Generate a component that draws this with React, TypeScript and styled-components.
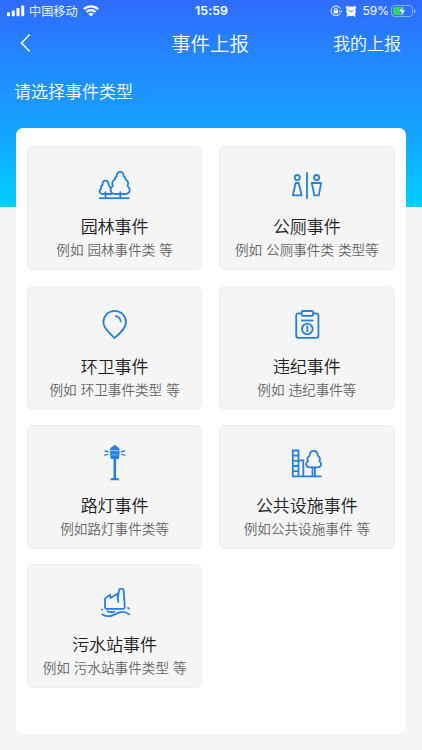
import React from "react";
import styled, { createGlobalStyle } from "styled-components";

const GlobalStyle = createGlobalStyle`
  * { box-sizing: border-box; }
  body {
    margin: 0;
    background: #f5f5f5;
    font-family: "Noto Sans CJK SC", sans-serif;
    font-weight: 350;
    -webkit-font-smoothing: antialiased;
  }
`;

const Page = styled.div`
  height: 750px;
  overflow: hidden;
  background: linear-gradient(180deg, #2f6bff 0, #2288ff 60px, #1c98ff 103px, #12aaff 145px, #00d0ff 207px, #f5f5f5 207px);
  color: #fff;
`;

const StatusBar = styled.header`
  height: 22px;
  display: grid;
  grid-template-columns: 1fr auto 1fr;
  align-items: center;
  padding: 0 6px 0 7px;
  line-height: 22px;
`;

const StatusGroup = styled.div<{ $end?: boolean }>`
  display: flex;
  align-items: center;
  justify-content: ${(p) => (p.$end ? "flex-end" : "flex-start")};
  svg { display: block; flex: none; }
`;

const Carrier = styled.span`
  font-size: 12.2px;
  margin: 0 5px 0 4px;
`;

const Clock = styled.span`
  font: 600 12.3px/22px Inter, sans-serif;
  letter-spacing: 0.1px;
`;

const Percent = styled.span`
  font: 400 12px/22px Inter, sans-serif;
  margin: 0 2px 0 5px;
`;

const NavBar = styled.nav`
  height: 44px;
  display: grid;
  grid-template-columns: 1fr auto 1fr;
  align-items: center;
  padding: 0 21px 0 19px;
`;

const BackButton = styled.button`
  width: 14px;
  height: 24px;
  padding: 0;
  border: 0;
  background: none;
  color: inherit;
  svg { display: block; }
`;

const NavTitle = styled.h1`
  margin: 0;
  padding-bottom: 3px;
  font-size: 19.4px;
  font-weight: inherit;
  line-height: 40px;
`;

const NavLink = styled.span`
  justify-self: end;
  padding-bottom: 2px;
  font-size: 17px;
  line-height: 40px;
`;

const Prompt = styled.p`
  margin: 0;
  height: 62px;
  padding: 12px 14px 0;
  font-size: 17px;
  line-height: 25px;
`;

const Panel = styled.main`
  margin: 0 16px;
  height: 606px;
  padding: 18.2px 11.5px 0 11px;
  border-radius: 7px;
  background: #fff;
  display: grid;
  grid-template-columns: 1fr 1fr;
  grid-auto-rows: 124px;
  align-content: start;
  gap: 15.35px 17px;
`;

const Card = styled.section`
  border: 1px solid #eeeeee;
  border-radius: 6px;
  background: #f5f5f5;
  display: flex;
  flex-direction: column;
  align-items: center;
  padding-top: 13px;
`;

const CardIcon = styled.svg`
  display: block;
  width: 60px;
  height: 50px;
  overflow: visible;
  fill: none;
  stroke: #2680e3;
  stroke-width: 1.8;
  stroke-linecap: round;
  stroke-linejoin: round;
`;

const CardTitle = styled.h2`
  margin: 3px 0 0;
  color: #202020;
  font-size: 17px;
  font-weight: inherit;
  line-height: 26px;
`;

const CardNote = styled.p`
  margin: 0;
  color: #666;
  font-size: 13.6px;
  line-height: 21px;
  word-spacing: 0.9px;
  white-space: nowrap;
`;

const SignalIcon = () => (
  <svg width="18" height="12" viewBox="0 0 18 12" fill="#fff">
    <rect x="0" y="7.2" width="3" height="4" rx=".8" />
    <rect x="4.8" y="5.4" width="3" height="5.8" rx=".8" />
    <rect x="9.5" y="3" width="3" height="8.2" rx=".8" />
    <rect x="14.2" y="0.4" width="3" height="10.8" rx=".8" />
  </svg>
);

const WifiIcon = () => (
  <svg width="16" height="12" viewBox="0 0 16 12" fill="none" stroke="#fff" strokeWidth="2.2">
    <path d="M.9 4.2a10.2 10.2 0 0 1 14.2 0" />
    <path d="M3.5 7a6.4 6.4 0 0 1 9 0" />
    <path d="M8 11.6 5.4 9a3.8 3.8 0 0 1 5.2 0Z" fill="#fff" stroke="none" />
  </svg>
);

const RotationLockIcon = () => (
  <svg width="12" height="12" viewBox="0 0 12 12" fill="none" stroke="#fff" strokeWidth="1">
    <path d="M10.3 3.6A4.9 4.9 0 1 0 10.2 8.3M8.9 5.6l1.7 1.5 1.2-1.7" />
    <rect x="3.7" y="5.3" width="4.4" height="3.2" rx=".5" fill="#fff" stroke="none" />
    <path d="M4.6 5.5V4.4a1.3 1.3 0 0 1 2.6 0v1.1" />
  </svg>
);

const AlarmIcon = () => (
  <svg width="12" height="12" viewBox="0 0 12 12" stroke="#fff" fill="none" strokeLinecap="round">
    <circle cx="6" cy="6.4" r="4.8" fill="#fff" stroke="none" />
    <path d="M1.6 2.8 2.9 1.7M10.4 2.8 9.1 1.7M2.5 10.8l.7-.9M9.5 10.8l-.7-.9" strokeWidth="1.8" />
    <path d="M3.8 5 6 6.7 8.2 5.5" stroke="#2c72ff" strokeWidth=".8" />
  </svg>
);

const BatteryIcon = () => (
  <svg width="25" height="12" viewBox="0 0 25 12">
    <rect x=".5" y=".5" width="21" height="11" rx="3" fill="none" stroke="#fff" strokeOpacity=".45" />
    <path d="M3.5 2H13v8H3.5Q2 10 2 8.5v-5Q2 2 3.5 2Z" fill="#35d45b" />
    <path d="M12.4.8 7.4 6.8h3.1l-.9 4.5 5.2-6.2h-3.2Z" fill="#fff" stroke="#2d72ff" strokeWidth=".7" />
    <path d="M23 4v4q1.6-.7 1.6-2T23 4Z" fill="#fff" fillOpacity=".5" />
  </svg>
);

const GardenIcon = () => (
  <CardIcon viewBox="0 0 60 50">
    <path d="M26.8 34H17.6c-2 0-3.2-1.5-2.9-3.3.2-1.2.8-1.8 1.5-2.3-.5-1.6.1-2.8 1.3-3.5 0-2.7 1-4.3 3-4.3s3.1 1.6 3.1 4.3c1 .6 1.5 1.4 1.3 2.6" />
    <path d="M29.9 34c-2.6 0-4.2-1.8-4.2-4.2 0-1.7.8-3 2.2-3.8-1.3-2.9-.5-5.1 1.9-6.5-.1-1.5.5-2.5 1.9-3 0-2.9 1.200-4.600 3.500-4.600s3.500 1.700 3.500 4.600c1.400.5 2 1.500 1.900 3 2.400 1.400 3.200 3.600 1.900 6.500 1.400.8 2.200 2.100 2.200 3.800 0 2.400-1.600 4.200-4.200 4.200Z" />
    <path d="M20.5 32.2v5M35.300 32.2v5" />
    <path d="M14 38.2h30.500" strokeLinecap="butt" />
  </CardIcon>
);

const RestroomIcon = () => (
  <CardIcon viewBox="0 0 60 50">
    <circle cx="20.3" cy="17.6" r="2.6" />
    <circle cx="39.6" cy="17.6" r="2.6" />
    <path d="M18.7 23h3l2.9 12.300h-8.800Z" />
    <path d="M34.8 23h9.300l-2.300 12.300h-4.500Z" />
    <path d="M30 13v25.200" />
  </CardIcon>
);

const PinIcon = () => (
  <CardIcon viewBox="0 0 60 50">
    <path d="M29.6 38.2c-5.3-5.3-11.2-10-11.2-16a11.3 11.3 0 0 1 22.6 0c0 6-6 10.7-11.4 16Z" />
    <path d="M30 16.2a5.7 5.7 0 0 1 5.8 5.9" strokeLinecap="butt" />
  </CardIcon>
);

const ClipboardIcon = () => (
  <CardIcon viewBox="0 0 60 50">
    <path d="M24.5 13.3h-3q-2.3 0-2.3 2.3v19.9q0 2.3 2.3 2.3h17.600q2.300 0 2.300-2.300V15.600q0-2.300-2.300-2.300h-3" />
    <rect x="24.5" y="11" width="11.7" height="4.8" rx="1.5" />
    <path d="M24 20.5h12.5" strokeLinecap="butt" />
    <circle cx="30.3" cy="29" r="5.3" />
    <path d="M30.3 25.5v6.5" strokeLinecap="butt" />
  </CardIcon>
);

const LampIcon = () => (
  <CardIcon viewBox="0 1 60 50">
    <path d="M24.6 11.9Q25.6 9 28 8.6q.2-1.6 1.8-1.6t1.8 1.6q2.400.4 3.400 3.300Z" fill="#2680e3" stroke="none" />
    <path d="M25.8 13.4h8l-.6 6.6h-6.800Z" fill="#2680e3" />
    <path d="M25.8 12.7h8M27 16.9h5.600" stroke="#8abaf0" strokeWidth=".8" />
    <path d="M29.8 20.5v20" strokeWidth="2.6" strokeLinecap="butt" />
    <path d="m20.2 13 3 .8M19.9 17.2l2.8-.8M39.4 13l-3 .8M39.7 17.2l-2.8-.8" strokeWidth="1.4" />
    <path d="M25.2 42.300q.2-2.300 2.300-2.300h4.600q2 0 2.300 2.300Z" fill="#2680e3" stroke="none" />
  </CardIcon>
);

const FacilitiesIcon = () => (
  <CardIcon viewBox="0 1 60 50">
    <path d="M43.9 38.4H15.8V12.5h5.7v25.9M15.8 17.6h5.7M15.8 22.8h5.7M15.8 28h5.7M15.8 33.2h5.7M21.5 22.4h4.8v16" strokeLinejoin="miter" />
    <path d="M34 29.3c-3 .5-4.9-.9-4.800-3.200.1-1.400.8-2.200 1.800-2.900-1.100-2.500-.4-4.400 1.700-5.500 0-2.900 1.500-4.900 4-4.900s4 2 4 4.900c2.200 1.100 2.800 3 1.700 5.500 1 .7 1.700 1.500 1.700 2.900 0 2.300-1.600 3.600-4.700 3.200Z" />
    <path d="M35.5 29.3v9M37.9 29.3v9" />
  </CardIcon>
);

const SewageIcon = () => (
  <CardIcon viewBox="0 2 60 50">
    <path d="M22 32.8Q20 33 20 31V22.6l5.1-3.9.5 3.3 6.6-4.2.6 3.8 1.3-7.7q.1-1.1 1.2-1.1h2.100q1.100 0 1.200 1.100L39.700 30.500q.2 2.300-2 2.300ZM32.800 21.600l.5 4.200" />
    <path d="M17 33.5h.1M43 31.9l.8.6M22.5 35.3q3 1.7 6.8.3" />
    <path d="M17.2 38.2q5.2 3.5 11 .9l5.7-2.5q5.2-2.2 10.4 1.8" />
  </CardIcon>
);

const events = [
  { title: "园林事件", note: "例如 园林事件类 等", Icon: GardenIcon },
  { title: "公厕事件", note: "例如 公厕事件类 类型等", Icon: RestroomIcon },
  { title: "环卫事件", note: "例如 环卫事件类型 等", Icon: PinIcon },
  { title: "违纪事件", note: "例如 违纪事件等", Icon: ClipboardIcon },
  { title: "路灯事件", note: "例如路灯事件类等", Icon: LampIcon },
  { title: "公共设施事件", note: "例如公共设施事件 等", Icon: FacilitiesIcon },
  { title: "污水站事件", note: "例如 污水站事件类型 等", Icon: SewageIcon },
];

export default function App() {
  return (
    <Page>
      <GlobalStyle />
      <StatusBar>
        <StatusGroup>
          <SignalIcon />
          <Carrier>中国移动</Carrier>
          <WifiIcon />
        </StatusGroup>
        <Clock>15:59</Clock>
        <StatusGroup $end>
          <RotationLockIcon />
          <span>&nbsp;</span>
          <AlarmIcon />
          <Percent>59%</Percent>
          <BatteryIcon />
        </StatusGroup>
      </StatusBar>
      <NavBar>
        <BackButton aria-label="返回">
          <svg width="14" height="24" viewBox="0 0 14 24" fill="none" stroke="#fff" strokeWidth="1.5">
            <path d="M10.7 2.5 2.5 11l8.2 8.500" />
          </svg>
        </BackButton>
        <NavTitle>事件上报</NavTitle>
        <NavLink>我的上报</NavLink>
      </NavBar>
      <Prompt>请选择事件类型</Prompt>
      <Panel>
        {events.map(({ title, note, Icon }) => (
          <Card key={title}>
            <Icon />
            <CardTitle>{title}</CardTitle>
            <CardNote>{note}</CardNote>
          </Card>
        ))}
      </Panel>
    </Page>
  );
}
